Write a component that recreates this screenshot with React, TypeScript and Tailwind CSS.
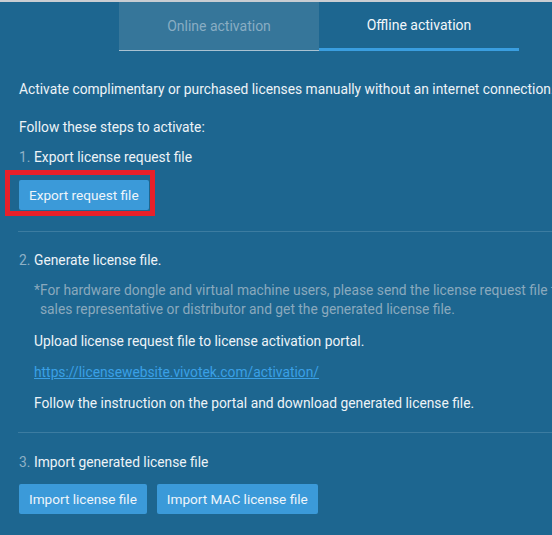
import React from 'react';

const font = { fontFamily: 'Roboto, "Liberation Sans", sans-serif' };

const Btn: React.FC<{ label: string }> = ({ label }) => (
  <button className="h-[30px] px-[10px] rounded-[2px] bg-[#3b9ad9] text-[#eef5fb] text-[13.6px] leading-[30px] whitespace-nowrap">
    {label}
  </button>
);

const Step: React.FC<{ n: string; text: string; className?: string }> = ({ n, text, className }) => (
  <div className={`flex leading-[20px] ${className ?? ''}`}>
    <span className="w-[15px] text-[#8fb1c6]">{n}</span>
    <span>{text}</span>
  </div>
);

export default function App() {
  return (
    <div style={font} className="w-[552px] h-[535px] overflow-hidden bg-[#1d6690] border-t-2 border-[#c9cdd2] text-[13.8px] text-[#edf3f7] whitespace-nowrap">
      <div className="flex pl-[119px]">
        <div className="w-[200px] h-[49px] box-border bg-[#36769a] border-b border-[#a9c2d2] flex items-center justify-center text-[14px] text-[#89adc3]">
          Online activation
        </div>
        <div className="w-[200px] h-[49px] box-border border-b-[3px] border-[#3a9ee0] flex items-center justify-center text-[14px] text-[#f2f7fa] pt-[1px]">
          Offline activation
        </div>
      </div>

      <div className="pl-[19px]">
        <div className="mt-[28px] leading-[20px]">
          Activate complimentary or purchased licenses manually without an internet connection.
        </div>
        <div className="mt-[18px] leading-[20px]">Follow these steps to activate:</div>
        <Step n="1." text="Export license request file" className="mt-[10px]" />
        <div className="mt-[13px] relative w-fit">
          <Btn label="Export request file" />
          <div className="absolute left-[-14px] top-[-10px] right-[-6px] bottom-[-6px] border-[5px] border-[#e8202a]" />
        </div>

        <div className="mt-[21px] h-px w-[700px] ml-[-1px] bg-[#3c7ca1]" />

        <Step n="2." text="Generate license file." className="mt-[18px]" />
        <div className="pl-[15px]">
          <div className="mt-[11px] flex text-[#8aa9bd] leading-[19px]">
            <span className="w-[9px]">*</span>
            <div>
              <div>For hardware dongle and virtual machine users, please send the license request file to your</div>
              <div>sales representative or distributor and get the generated license file.</div>
            </div>
          </div>
          <div className="mt-[12px] leading-[20px]">Upload license request file to license activation portal.</div>
          <div className="mt-[11px] leading-[20px]">
            <a href="#" className="text-[#3aa0e6] underline">https://licensewebsite.vivotek.com/activation/</a>
          </div>
          <div className="mt-[11px] leading-[20px]">Follow the instruction on the portal and download generated license file.</div>
        </div>

        <div className="mt-[19px] h-px w-[700px] ml-[-1px] bg-[#3c7ca1]" />

        <Step n="3." text="Import generated license file" className="mt-[19px]" />
        <div className="mt-[12px] flex gap-[10px]">
          <Btn label="Import license file" />
          <Btn label="Import MAC license file" />
        </div>
      </div>
    </div>
  );
}
